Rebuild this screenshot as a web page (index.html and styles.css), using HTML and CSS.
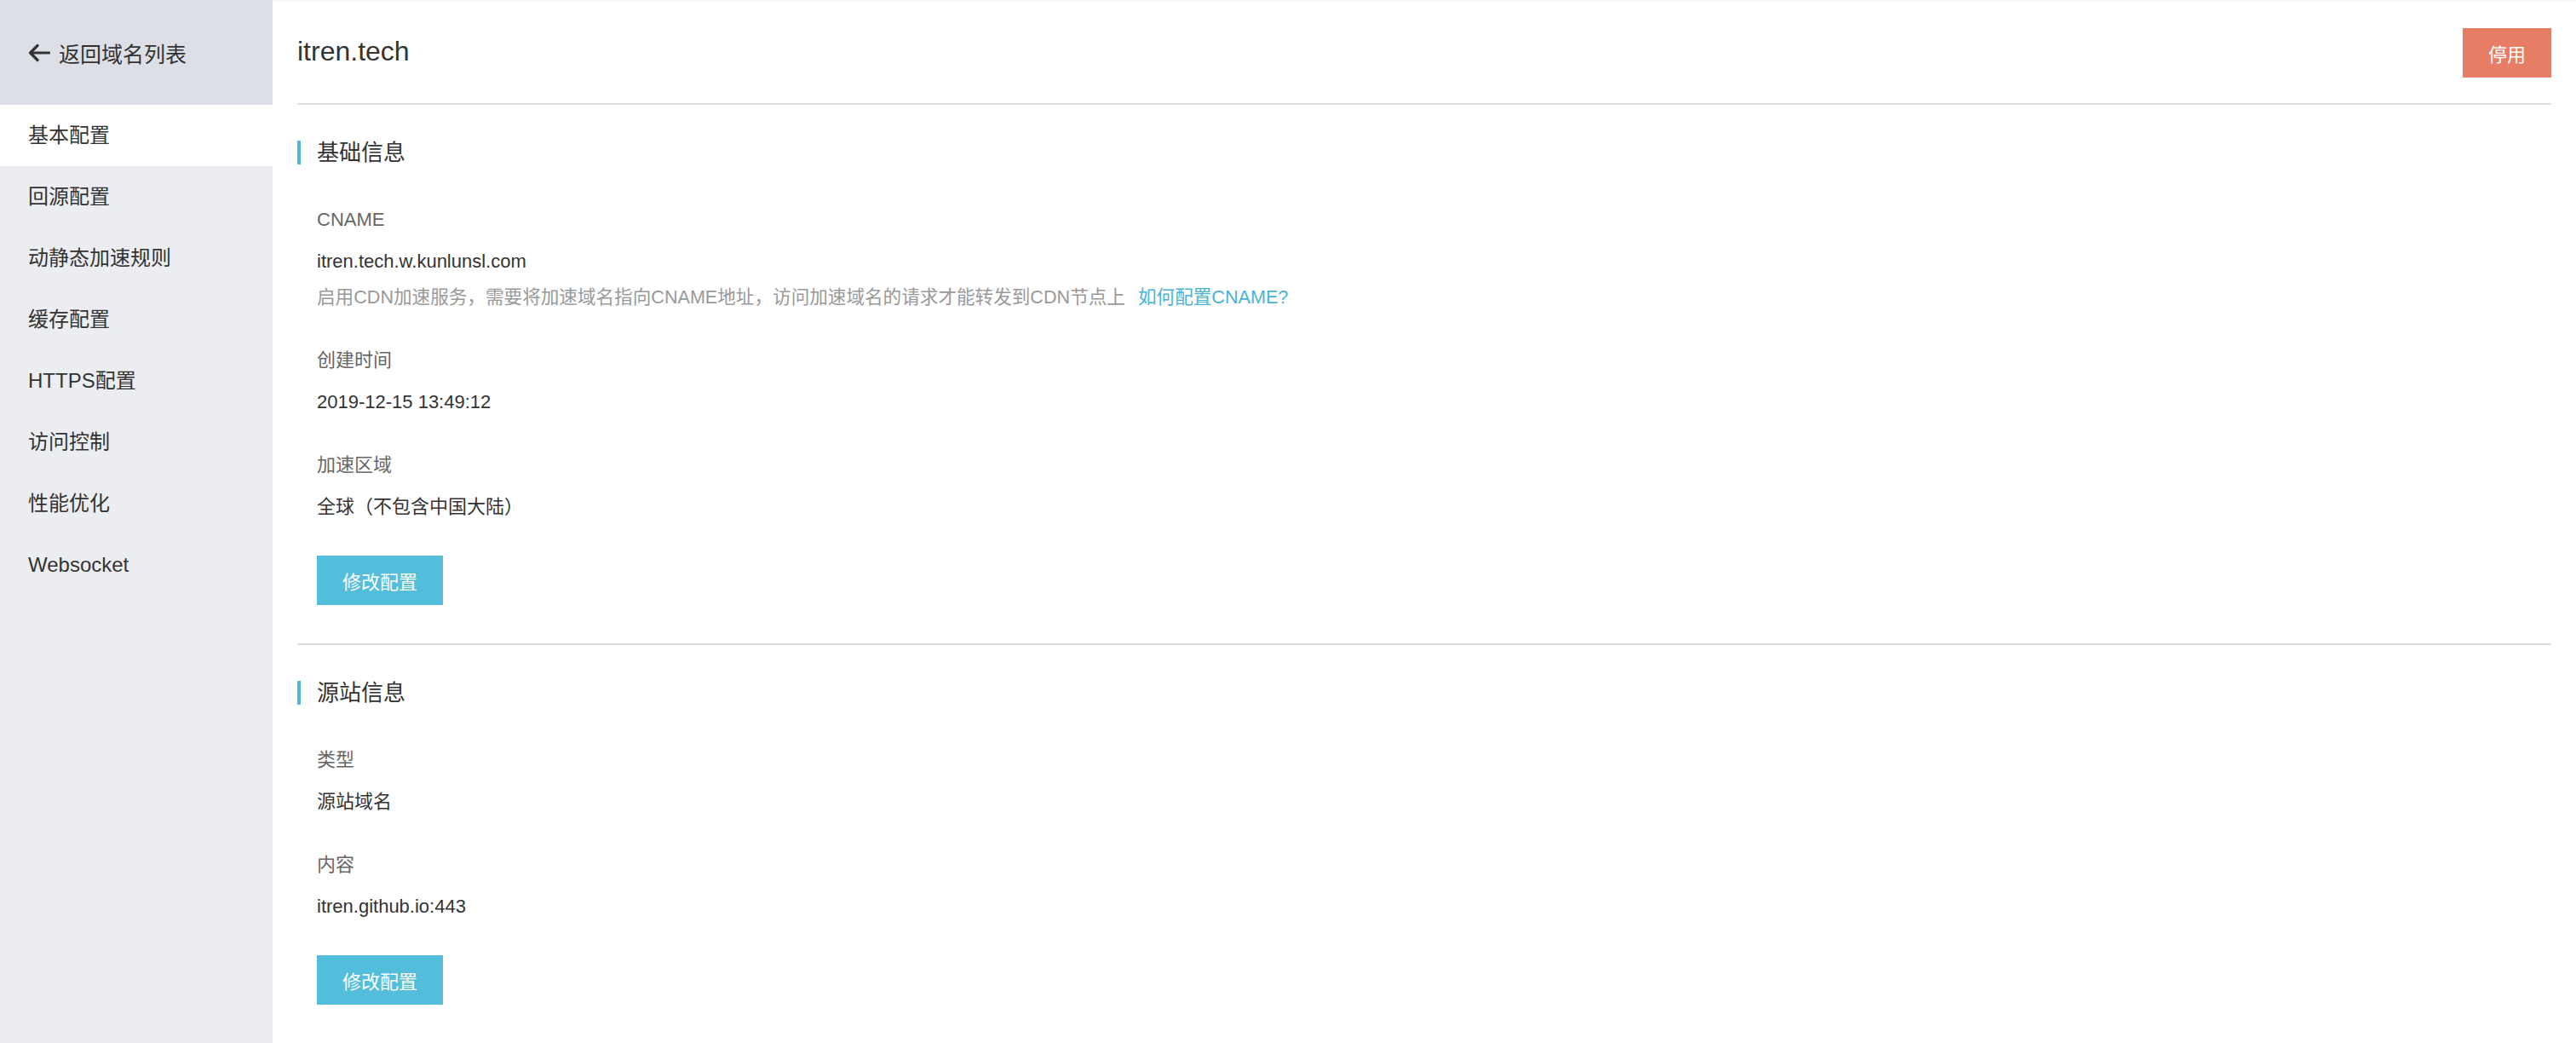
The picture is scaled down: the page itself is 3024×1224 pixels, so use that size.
FILE: index.html
```html
<!DOCTYPE html>
<html lang="zh-CN">
<head>
    <meta charset="UTF-8">
    <meta name="viewport" content="width=device-width, initial-scale=1.0">
    <title>itren.tech - 域名配置</title>
    <link rel="stylesheet" href="styles.css">
</head>
<body>
    <div class="sidebar">
        <a class="back" href="#">
            <svg class="back-icon" viewBox="0 0 26 22" width="26" height="22">
                <path d="M24.5 11H3 M11 2.5L2.5 11 11 19.5" fill="none" stroke="#333" stroke-width="3.2" stroke-linecap="round" stroke-linejoin="round"/>
            </svg>
            <span>返回域名列表</span>
        </a>
        <ul class="menu">
            <li class="menu-item active">基本配置</li>
            <li class="menu-item">回源配置</li>
            <li class="menu-item">动静态加速规则</li>
            <li class="menu-item">缓存配置</li>
            <li class="menu-item">HTTPS配置</li>
            <li class="menu-item">访问控制</li>
            <li class="menu-item">性能优化</li>
            <li class="menu-item">Websocket</li>
        </ul>
    </div>

    <div class="main">
        <div class="header">
            <h1 class="domain">itren.tech</h1>
            <button class="btn btn-stop">停用</button>
        </div>

        <div class="section">
            <h2 class="section-title">基础信息</h2>
            <div class="section-body">
                <div class="field">
                    <div class="field-label">CNAME</div>
                    <div class="field-value">itren.tech.w.kunlunsl.com</div>
                    <div class="field-tip">启用CDN加速服务，需要将加速域名指向CNAME地址，访问加速域名的请求才能转发到CDN节点上<a class="tip-link" href="#">如何配置CNAME?</a></div>
                </div>
                <div class="field">
                    <div class="field-label">创建时间</div>
                    <div class="field-value">2019-12-15 13:49:12</div>
                </div>
                <div class="field">
                    <div class="field-label">加速区域</div>
                    <div class="field-value">全球（不包含中国大陆）</div>
                </div>
                <button class="btn btn-edit">修改配置</button>
            </div>
        </div>

        <div class="section">
            <h2 class="section-title">源站信息</h2>
            <div class="section-body">
                <div class="field">
                    <div class="field-label">类型</div>
                    <div class="field-value">源站域名</div>
                </div>
                <div class="field">
                    <div class="field-label">内容</div>
                    <div class="field-value">itren.github.io:443</div>
                </div>
                <button class="btn btn-edit">修改配置</button>
            </div>
        </div>
    </div>
</body>
</html>
```

FILE: styles.css
```css
body {
    margin: 0;
    height: 100vh;
    display: flex;
    overflow: hidden;
    font-family: "Liberation Sans", "Noto Sans CJK SC", sans-serif;
    color: #333;
    background: #fff;
}

/* 左侧菜单 */
.sidebar {
    width: 320px;
    flex-shrink: 0;
    background: #ebedf0;
}

.back {
    height: 123px;
    display: flex;
    align-items: center;
    padding-left: 33px;
    gap: 10px;
    background: #dcdfe6;
    color: #333;
    font-size: 25px;
    text-decoration: none;
}

.back-icon {
    display: block;
}

.menu {
    list-style: none;
    margin: 0;
    padding: 0;
}

.menu-item {
    height: 72px;
    line-height: 72px;
    padding-left: 33px;
    font-size: 24px;
    color: #333;
    cursor: pointer;
}

.menu-item.active {
    background: #fff;
}

/* 右侧内容 */
.main {
    flex: 1;
    padding: 0 29px;
    box-shadow: inset 0 6px 6px -6px rgba(0, 0, 0, 0.08);
}

.header {
    height: 121px;
    display: flex;
    align-items: center;
    justify-content: space-between;
    border-bottom: 2px solid #dcdcdc;
}

.domain {
    margin: 0;
    font-size: 32px;
    font-weight: normal;
    color: #333;
}

.btn {
    height: 58px;
    border: none;
    color: #fff;
    font-size: 22px;
    font-family: inherit;
    cursor: pointer;
}

.btn-stop {
    width: 104px;
    margin-top: 3px;
    background: #e67d64;
}

.btn-edit {
    width: 148px;
    background: #53bedc;
}

.section {
    padding: 42px 0 45px;
    border-bottom: 2px solid #dcdcdc;
}

.section:last-child {
    border-bottom: none;
}

.section-title {
    margin: 0 0 48px;
    height: 28px;
    line-height: 28px;
    padding-left: 19px;
    border-left: 4px solid #4db8d6;
    font-size: 26px;
    font-weight: normal;
    color: #333;
}

.section-body {
    padding-left: 23px;
}

.field {
    margin-bottom: 40px;
    font-size: 22px;
}

.field-label {
    line-height: 34px;
    color: #666;
}

.field-value {
    margin-top: 15px;
    line-height: 34px;
    color: #333;
}

.field-tip {
    margin-top: 8px;
    line-height: 34px;
    font-size: 21.6px;
    color: #999;
}

.tip-link {
    margin-left: 15px;
    color: #4ab3d4;
    text-decoration: none;
}
```
